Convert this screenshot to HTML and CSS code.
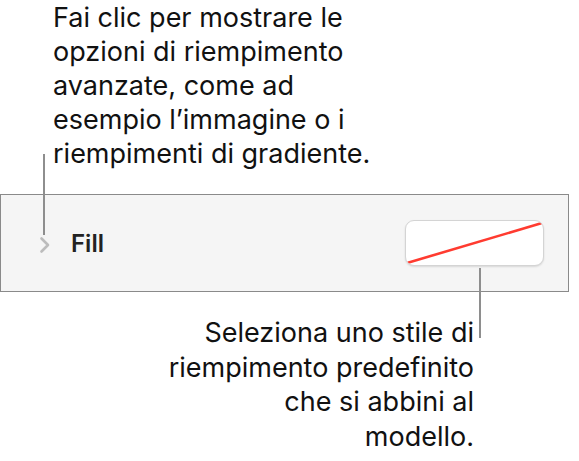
FILE: index.html
```html
<!DOCTYPE html>
<html lang="it">
<head>
    <meta charset="UTF-8">
    <meta name="viewport" content="width=device-width, initial-scale=1.0">
    <title>Riempimento</title>
    <link rel="stylesheet" href="styles.css">
</head>
<body>

<div class="figure">
    <p class="callout callout-top">Fai clic per mostrare le<br>opzioni di riempimento<br>avanzate, come ad<br>esempio l’immagine o i<br>riempimenti di gradiente.</p>

    <div class="panel">
        <span class="chevron">
            <svg width="12" height="18" viewBox="0 0 12 18">
                <path d="M2.5 2.5 L9 9 L2.5 15.5" fill="none" stroke="#bcbcbc" stroke-width="2.6" stroke-linecap="round" stroke-linejoin="round"/>
            </svg>
        </span>
        <span class="panel-title">Fill</span>
        <button class="swatch" type="button">
            <svg width="139" height="46" viewBox="0 0 139 46">
                <line x1="2" y1="43" x2="137" y2="3" stroke="#ff3b30" stroke-width="2.6"/>
            </svg>
        </button>
    </div>

    <p class="callout callout-bottom">Seleziona uno stile di<br>riempimento predefinito<br>che si abbini al<br>modello.</p>

    <!-- leader lines -->
    <span class="leader leader-fill"></span>
    <span class="leader leader-swatch"></span>
</div>

</body>
</html>
```

FILE: styles.css
```css
body {
    margin: 0;
    background: #fff;
    font-family: Inter, "Noto Sans", sans-serif;
    color: #111;
}
.figure {
    position: relative;
    width: 579px;
    height: 461px;
}
.callout {
    margin: 0;
    font-size: 27px;
    line-height: 34px;
}
.callout-top {
    padding: 1px 0 0 53px;
    height: 194px;
    box-sizing: border-box;
}
.panel {
    display: flex;
    align-items: center;
    width: 569px;
    height: 98px;
    box-sizing: border-box;
    padding: 0 24px 0 38px;
    background: #f5f5f5;
    border: 1px solid #8a8a8a;
}
.chevron {
    display: flex;
    width: 12px;
    height: 18px;
    margin-top: 3px;
}
.panel-title {
    margin-left: 20px;
    font-size: 24px;
    font-weight: 600;
    color: #222;
}
.swatch {
    display: block;
    margin-left: auto;
    padding: 0;
    width: 139px;
    height: 46px;
    background: #fff;
    border: 1px solid #d4d4d4;
    border-radius: 9px;
    box-shadow: 0 1px 2px rgba(0, 0, 0, 0.12);
    overflow: hidden;
}
.swatch svg {
    display: block;
    margin: -1px;
}
.callout-bottom {
    width: 474px;
    padding-top: 24px;
    line-height: 34.5px;
    text-align: right;
}
.leader {
    position: absolute;
    width: 2px;
    background: #8e8e8e;
}
.leader-fill {
    left: 43px;
    top: 154px;
    height: 81px;
}
.leader-swatch {
    left: 479px;
    top: 268px;
    height: 70px;
}
```
